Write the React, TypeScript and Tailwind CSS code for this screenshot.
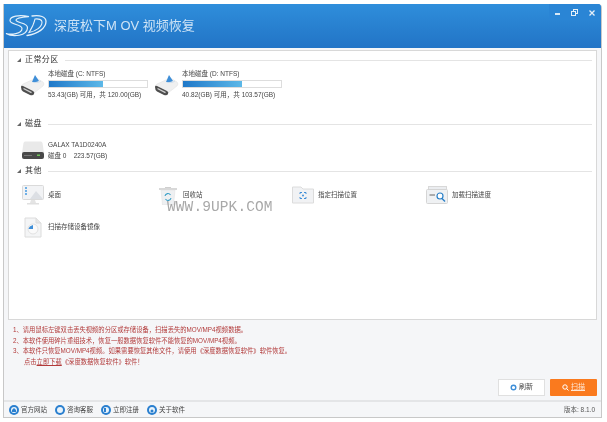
import React from "react";

const cjk = "font-['Liberation_Sans','Noto_Sans_CJK_SC',sans-serif]";

function Section({ title, lineGap }: { title: string; lineGap: string }) {
  return (
    <div className="flex h-[12px] items-center pl-[7px] pr-[3px]">
      <div className="h-0 w-0 border-b-[4px] border-l-[4px] border-b-[#666] border-l-transparent" />
      <span className="ml-[4px] text-[8px] leading-[12px] tracking-[0.4px] text-[#333]">{title}</span>
      <div className={`h-[1px] flex-1 bg-[#e4e4e4] ${lineGap}`} />
    </div>
  );
}

function DriveIcon() {
  return (
    <svg width="25" height="22" viewBox="0 0 25 22" className="shrink-0">
      <path d="M2 12 Q1 11 3 10 L14 5 Q16 4.5 18 5 L23 8 Q25 10 23 12 L14 19 Q12 20.5 10 19.5 Z" fill="#f0f0f0" stroke="#e0e0e0" strokeWidth="0.5" />
      <path d="M1 13 Q1 11 3 12 L13 17 Q15 18 14 20 Q13 22 10 21 L3 17.5 Q1 16 1 13Z" fill="#4e4e4e" />
      <path d="M3.5 14.5 L11.5 18.6" stroke="#cfcfcf" strokeWidth="1.4" />
      <path d="M15 1 L19 7 Q17 8.5 12 8 Z" fill="#3f8fd8" />
      <path d="M15 8.5 Q19 9 21 7" stroke="#c9d9e8" strokeWidth="0.8" fill="none" />
    </svg>
  );
}

function Drive({ name, used, total, pct }: { name: string; used: string; total: string; pct: number }) {
  return (
    <div className="flex w-[134px] items-center">
      <DriveIcon />
      <div className="ml-[3px] flex w-[101px] flex-col text-[6.5px] leading-[8px] text-[#444]">
        <span>{name}</span>
        <div className="mt-[2px] h-[8px] w-[100px] border border-[#ddd] bg-white">
          <div className="h-full bg-gradient-to-r from-[#1f78c8] to-[#5cb8e8]" style={{ width: `${pct}%` }} />
        </div>
        <span className="mt-[3px] whitespace-nowrap">{used} 可用，共 {total}</span>
      </div>
    </div>
  );
}

function DiskIcon() {
  return (
    <svg width="22" height="19" viewBox="0 0 22 19" className="shrink-0">
      <path d="M3 0.5 H19 Q20 0.5 20.5 2 L22 12 H0 L1.5 2 Q2 0.5 3 0.5Z" fill="#e9e9e9" />
      <rect x="0" y="11" width="22" height="7" rx="2" fill="#484848" />
      <rect x="15" y="13.5" width="3" height="1.5" fill="#6fc35a" />
      <rect x="2" y="14" width="8" height="1" fill="#777" />
    </svg>
  );
}

function DesktopIcon() {
  return (
    <svg width="22" height="20" viewBox="0 0 22 20" className="shrink-0">
      <rect x="0.5" y="0.5" width="21" height="14" rx="1" fill="#f2f3f5" stroke="#dadada" />
      <path d="M8 14 L14 6 L21 14Z" fill="#dcdfe4" />
      <rect x="3" y="2" width="2" height="2" fill="#6fb0e6" />
      <rect x="3" y="5" width="2" height="2" fill="#6fb0e6" />
      <rect x="3" y="8" width="2" height="2" fill="#6fb0e6" />
      <path d="M9 15 L13 15 L14 18 L8 18Z" fill="#e4e4e4" />
      <rect x="5" y="18" width="12" height="1.5" fill="#e0e0e0" />
    </svg>
  );
}

function RecycleIcon() {
  return (
    <svg width="18" height="19" viewBox="0 0 18 19" className="shrink-0">
      <path d="M0 2 L18 2 L18 4 L0 4Z" fill="#d8d8d8" />
      <path d="M6 1 L12 1 L12 2 L6 2Z" fill="#cfcfcf" />
      <path d="M2 4 L16 4 L14.5 19 L3.5 19Z" fill="#eef0f2" stroke="#dedede" strokeWidth="0.5" />
      <path d="M6 10 A3 3 0 0 1 11.5 9 M12 12 A3 3 0 0 1 6.5 13" stroke="#3aa0c8" strokeWidth="1.1" fill="none" />
    </svg>
  );
}

function FolderScanIcon() {
  return (
    <svg width="22" height="18" viewBox="0 0 22 18" className="shrink-0">
      <path d="M0.5 1 L9 1 L11 3 L21.5 3 L21.5 17 L0.5 17Z" fill="#f1f2f4" stroke="#dcdcdc" />
      <path d="M8 8 V6.5 H10 M12 6.5 H14 V8 M14 11 V12.5 H12 M10 12.5 H8 V11" stroke="#3f8fd8" strokeWidth="1" fill="none" />
      <circle cx="11" cy="9.5" r="1" fill="#3f8fd8" />
    </svg>
  );
}

function LoadIcon() {
  return (
    <svg width="23" height="19" viewBox="0 0 23 19" className="shrink-0">
      <rect x="2.5" y="0.5" width="18" height="15" fill="#ebedf0" stroke="#d8d8d8" />
      <rect x="0.5" y="3.5" width="21" height="14" rx="1" fill="#eff1f3" stroke="#d5d5d5" />
      <circle cx="14" cy="10" r="3" fill="#fff" stroke="#2b80c8" strokeWidth="1.2" />
      <path d="M16 12.5 L19 15.5" stroke="#2b80c8" strokeWidth="1.4" />
      <path d="M3.5 9 H9" stroke="#666" strokeWidth="1" />
    </svg>
  );
}

function ImageIcon() {
  return (
    <svg width="18" height="21" viewBox="0 0 18 21" className="shrink-0">
      <path d="M1 1 H12 L17 6 V20 H1Z" fill="#f4f5f6" stroke="#dcdcdc" />
      <path d="M12 1 V6 H17" fill="#e6e6e6" stroke="#dcdcdc" />
      <circle cx="9" cy="12" r="5" fill="#fafafa" stroke="#e2e2e2" />
      <path d="M9 8 L9 12 L4.5 12 Q5 9 9 8 Z" fill="#3f8fd8" />
    </svg>
  );
}

function Item({ icon, label, w }: { icon: React.ReactNode; label: string; w: string }) {
  return (
    <div className={`flex ${w} items-center`}>
      <div className="flex w-[26px] shrink-0 justify-center">{icon}</div>
      <span className="ml-[2px] whitespace-nowrap text-[6.5px] text-[#444]">{label}</span>
    </div>
  );
}

function FootLink({ label, glyph }: { label: string; glyph: React.ReactNode }) {
  return (
    <div className="flex w-[46px] items-center gap-[2px]">
      <svg width="10" height="10" viewBox="0 0 10 10" className="shrink-0">
        <circle cx="5" cy="5" r="5" fill="#2a7fcf" />
        <circle cx="5" cy="5" r="3" fill="#e9f3fb" />
        {glyph}
      </svg>
      <span className="whitespace-nowrap text-[6.5px] text-[#444]">{label}</span>
    </div>
  );
}

export default function App() {
  return (
    <div className={`relative h-[422px] w-[607px] overflow-hidden bg-white pl-[3px] pr-[5px] pt-[4px] pb-[4px] blur-[0.35px] ${cjk}`}>
      <div className="flex h-full flex-col overflow-hidden rounded-tr-[4px] border-x border-b border-[#c8c8c8] bg-[#f5f6f8]">
        {/* title bar */}
        <div className="flex h-[44px] shrink-0 items-start bg-gradient-to-b from-[#2f8edb] to-[#2274c6]">
          <div className="flex h-full items-center pl-[1px]">
            <svg width="42" height="24" viewBox="0 0 42 24" fill="none" strokeLinecap="round">
              <path d="M24 2.5 C14 0.5 5 2 5 6.5 C5 11 17 10 17 14.5 C17 20 6 21 1 19.5 C8 23.5 22 22 22.5 14 C23 8 11 9.5 11 6 C11 3.5 18 3 24 2.5Z" fill="#2a84d0" stroke="#e3f0fa" strokeWidth="1.2" />
              <path d="M27 2 C35 0.5 41 3 41 7.5 C41 14 33 20 22 21.5" stroke="#e3f0fa" strokeWidth="1.3" />
              <path d="M30 5 C29 10 27 14 24 18.5 C31 17 37 13 37 8 C37 5.5 33.5 4.5 30 5Z" stroke="#e3f0fa" strokeWidth="1.1" />
            </svg>
            <span className="ml-[7px] whitespace-nowrap text-[13px] leading-[20px] text-[#cfe4f6]">深度松下M OV 视频恢复</span>
          </div>
          <div className="ml-auto flex h-[16px] w-[52px] items-center justify-around bg-[#2a85d5] pr-[1px] pt-[1px]">
            <div className="mt-[3px] h-[1.5px] w-[5px] bg-[#d8e8f5]" />
            <svg width="7" height="7" viewBox="0 0 7 7" fill="none" stroke="#e4eff8" strokeWidth="1">
              <rect x="2.5" y="0.5" width="4" height="4" />
              <rect x="0.5" y="2.5" width="4" height="4" fill="#2a85d5" />
            </svg>
            <svg width="6" height="6" viewBox="0 0 6 6" stroke="#e4eff8" strokeWidth="1.3">
              <path d="M0.5 0.5 L5.5 5.5 M5.5 0.5 L0.5 5.5" />
            </svg>
          </div>
        </div>

        {/* content panel */}
        <div className="mx-[4px] mt-[2px] flex h-[270px] shrink-0 flex-col border border-[#d8d8d8] bg-white px-[1px] pt-[3px]">
          <Section title="正常分区" lineGap="ml-[6px]" />
          <div className="mt-[4px] flex pl-[10px]">
            <Drive name="本地磁盘 (C: NTFS)" used="53.43(GB)" total="120.00(GB)" pct={55} />
            <Drive name="本地磁盘 (D: NTFS)" used="40.82(GB)" total="103.57(GB)" pct={60} />
          </div>
          <div className="mt-[19px]">
            <Section title="磁盘" lineGap="ml-[6px]" />
          </div>
          <div className="mt-[9px] flex items-center pl-[12px]">
            <DiskIcon />
            <div className="ml-[4px] flex flex-col text-[6.5px] leading-[11px] text-[#444]">
              <span>GALAX TA1D0240A</span>
              <span>磁盘 0 &nbsp; &nbsp;223.57(GB)</span>
            </div>
          </div>
          <div className="mt-[4px]">
            <Section title="其他" lineGap="ml-[6px]" />
          </div>
          <div className="mt-[7px] flex h-[22px] pl-[10px]">
            <Item icon={<DesktopIcon />} label="桌面" w="w-[135px]" />
            <Item icon={<RecycleIcon />} label="回收站" w="w-[135px]" />
            <Item icon={<FolderScanIcon />} label="指定扫描位置" w="w-[134px]" />
            <Item icon={<LoadIcon />} label="加载扫描进度" w="w-[134px]" />
          </div>
          <div className="mt-[10px] flex h-[22px] pl-[10px]">
            <Item icon={<ImageIcon />} label="扫描存储设备镜像" w="w-[135px]" />
          </div>
        </div>

        {/* notes + actions */}
        <div className="relative min-h-0 flex-1">
          <div className="pl-[9px] pt-[5px] text-[6.3px] leading-[10.7px] text-[#b23a3a]">
            <p>1、请用鼠标左键双击丢失视频的分区或存储设备，扫描丢失的MOV/MP4视频数据。</p>
            <p>2、本软件使用碎片重组技术，恢复一般数据恢复软件不能恢复的MOV/MP4视频。</p>
            <p>3、本软件只恢复MOV/MP4视频。如果需要恢复其他文件，请使用《深度数据恢复软件》软件恢复。</p>
            <p className="pl-[11px]">点击<span className="underline">立即下载</span>《深度数据恢复软件》软件！</p>
          </div>
          <div className="absolute right-[4px] top-[59px] flex gap-[5px]">
            <div className="flex h-[17px] w-[47px] items-center justify-center gap-[2px] border border-[#e0e0e0] bg-white text-[7px] text-[#444]">
              <svg width="7" height="7" viewBox="0 0 7 7" fill="none"><circle cx="3.5" cy="3.5" r="2.3" stroke="#3f8fd8" strokeWidth="1.4" /></svg>
              刷新
            </div>
            <div className="flex h-[17px] w-[47px] items-center justify-center gap-[2px] rounded-[1px] bg-[#fa7a1e] text-[7px] text-[#ffe6d2]">
              <svg width="7" height="7" viewBox="0 0 7 7" fill="none" stroke="#fff" strokeWidth="1"><circle cx="3" cy="3" r="2.2" /><path d="M4.6 4.6 L6.5 6.5" /></svg>
              <span className="underline">扫描</span>
            </div>
          </div>
        </div>

        {/* status bar */}
        <div className="flex h-[17px] shrink-0 items-center border-t-2 border-[#e4e5e7] pl-[5px] pr-[6px]">
          <FootLink label="官方网站" glyph={<path d="M3 5 L5 3 L7 5 V7 H3Z" fill="#2a7fcf" />} />
          <FootLink label="咨询客服" glyph={<circle cx="5" cy="5" r="1.5" fill="#e9f3fb" />} />
          <FootLink label="立即注册" glyph={<path d="M3 3 H5 V7 H3Z" fill="#2a7fcf" />} />
          <FootLink label="关于软件" glyph={<circle cx="5" cy="6" r="1.5" fill="#2a7fcf" />} />
          <span className="ml-auto text-[6.5px] text-[#555]">版本: 8.1.0</span>
        </div>
      </div>

      {/* watermark */}
      <div className="absolute left-[167px] top-[199px] whitespace-nowrap font-['Liberation_Mono',monospace] text-[14.5px] leading-[16px] tracking-[0.1px] text-[#a8a8a8]">
        WWW.9UPK.COM
      </div>
    </div>
  );
}
